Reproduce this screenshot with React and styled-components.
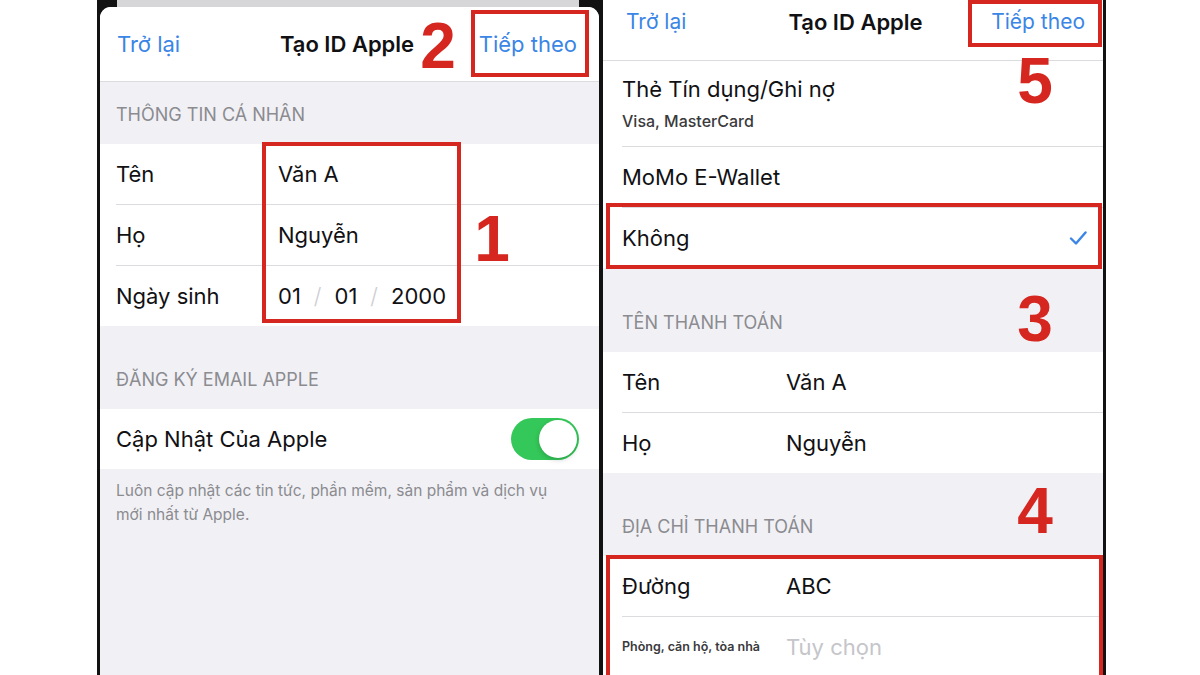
import React from 'react';
import styled, { createGlobalStyle } from 'styled-components';

const C = {
  blue: '#3a85e6',
  text: '#111114',
  gray: '#8b8b90',
  sep: '#dcdce0',
  bg: '#f1f1f5',
  red: '#d5261f',
  frame: '#121212',
};

const Global = createGlobalStyle`
  html, body { margin: 0; padding: 0; background: #fff; }
  body {
    font-family: Inter, "Noto Sans", "Liberation Sans", sans-serif;
    -webkit-font-smoothing: antialiased;
  }
`;

const Page = styled.div`
  position: relative;
  width: 1200px;
  height: 675px;
  overflow: hidden;
  display: flex;
  padding-left: 97px;
  box-sizing: border-box;
  background: #fff;
`;

const Phone = styled.div`
  flex-shrink: 0;
  display: flex;
  flex-direction: column;
  width: ${p => p.$w}px;
  height: 675px;
  background: ${C.frame};
  border-left: ${p => p.$bl}px solid ${C.frame};
  border-right: ${p => p.$br}px solid ${C.frame};
  overflow: hidden;
`;

const BackCard = styled.div`
  flex-shrink: 0;
  height: 7px;
  margin: 0 20px 0 17px;
  background: #d6d6d8;
`;

const Sheet = styled.div`
  flex: 1;
  display: flex;
  flex-direction: column;
  background: ${C.bg};
  border-radius: ${p => p.$r}px ${p => p.$r}px 0 0;
  overflow: hidden;
`;

const NavBar = styled.div`
  flex-shrink: 0;
  box-sizing: border-box;
  height: ${p => p.$h}px;
  display: grid;
  grid-template-columns: 1fr auto 1fr;
  align-items: center;
  padding: 0 ${p => p.$pr}px ${p => p.$pb}px ${p => p.$pl}px;
  background: #fff;
  border-bottom: 1px solid ${C.sep};
`;

const NavButton = styled.span`
  justify-self: ${p => (p.$end ? 'end' : 'start')};
  font-size: ${p => p.$fs}px;
  line-height: 28px;
  color: ${C.blue};
`;

const NavTitle = styled.span`
  font-size: 22px;
  line-height: 28px;
  font-weight: 600;
  color: ${C.text};
`;

const SectionHeader = styled.div`
  flex-shrink: 0;
  box-sizing: border-box;
  height: ${p => p.$h}px;
  display: flex;
  align-items: flex-end;
  padding: 0 0 18px ${p => p.$pl}px;
  font-size: 18px;
  line-height: 22px;
  color: ${C.gray};
`;

const Group = styled.div`
  flex-shrink: 0;
  display: flex;
  flex-direction: column;
  background: #fff;
`;

const Row = styled.div`
  box-sizing: border-box;
  display: flex;
  align-items: center;
  min-height: 61px;
  margin-left: ${p => p.$pl}px;
  padding-right: ${p => p.$pr || 16}px;
  border-bottom: 1px solid ${C.sep};
  &:last-child {
    border-bottom: none;
    min-height: 60px;
  }
`;

const TallRow = styled(Row)`
  flex-direction: column;
  align-items: flex-start;
  padding-top: 14px;
  padding-bottom: 15px;
`;

const Label = styled.span`
  flex-shrink: 0;
  width: ${p => p.$w}px;
  font-size: 22px;
  line-height: 28px;
  color: ${C.text};
`;

const SmallLabel = styled(Label)`
  font-size: 12.5px;
  font-weight: 600;
  color: #3a3a3c;
`;

const Value = styled.span`
  flex: 1;
  font-size: 22px;
  line-height: 28px;
  color: ${p => (p.$placeholder ? '#c5c5ca' : C.text)};
`;

const SubText = styled.span`
  margin-top: 8px;
  font-size: 16px;
  line-height: 20px;
  font-weight: 500;
  color: #3a3a3c;
`;

const DateField = styled.div`
  display: flex;
  align-items: center;
  gap: 13px;
  font-size: 22px;
  line-height: 28px;
  color: ${C.text};
`;

const Slash = styled.span`
  color: #cdcdd2;
  font-weight: 300;
`;

const Toggle = styled.div`
  margin-left: auto;
  width: 68px;
  height: 42px;
  border-radius: 21px;
  background: #34c759;
  display: flex;
  align-items: center;
  justify-content: flex-end;
  padding: 0 2px;
  box-sizing: border-box;
`;

const Knob = styled.div`
  width: 38px;
  height: 38px;
  border-radius: 50%;
  background: #fff;
  box-shadow: 0 2px 5px rgba(0, 0, 0, 0.18);
`;

const Footer = styled.div`
  padding: 10px 40px 0 16px;
  font-size: 15.5px;
  line-height: 24px;
  color: ${C.gray};
`;

const Check = styled.svg`
  margin-left: auto;
  width: 18px;
  height: 16px;
`;

const Mark = styled.div`
  position: absolute;
  box-sizing: border-box;
  left: ${p => p.$x}px;
  top: ${p => p.$y}px;
  width: ${p => p.$w}px;
  height: ${p => p.$h}px;
  border: 4px solid ${C.red};
  pointer-events: none;
`;

const Num = styled.div`
  position: absolute;
  left: ${p => p.$cx - 20}px;
  top: ${p => p.$y}px;
  width: 40px;
  text-align: center;
  font-family: "Liberation Sans", Arial, sans-serif;
  font-weight: 700;
  font-size: 64px;
  line-height: 64px;
  color: ${C.red};
`;

export default function App() {
  return (
    <>
      <Global />
      <Page>
        <Phone $w={499} $bl={3} $br={4}>
          <BackCard />
          <Sheet $r={11}>
            <NavBar $h={75} $pl={17} $pr={22} $pb={0}>
              <NavButton $fs={22}>Trở lại</NavButton>
              <NavTitle>Tạo ID Apple</NavTitle>
              <NavButton $fs={22} $end>Tiếp theo</NavButton>
            </NavBar>
            <SectionHeader $h={62} $pl={16}>THÔNG TIN CÁ NHÂN</SectionHeader>
            <Group>
              <Row $pl={16}>
                <Label $w={162}>Tên</Label>
                <Value>Văn A</Value>
              </Row>
              <Row $pl={16}>
                <Label $w={162}>Họ</Label>
                <Value>Nguyễn</Value>
              </Row>
              <Row $pl={16}>
                <Label $w={162}>Ngày sinh</Label>
                <DateField>
                  <span>01</span>
                  <Slash>/</Slash>
                  <span>01</span>
                  <Slash>/</Slash>
                  <span>2000</span>
                </DateField>
              </Row>
            </Group>
            <SectionHeader $h={83} $pl={16}>ĐĂNG KÝ EMAIL APPLE</SectionHeader>
            <Group>
              <Row $pl={16} $pr={20}>
                <Label $w={260}>Cập Nhật Của Apple</Label>
                <Toggle><Knob /></Toggle>
              </Row>
            </Group>
            <Footer>
              Luôn cập nhật các tin tức, phần mềm, sản phẩm và dịch vụ mới nhất từ Apple.
            </Footer>
          </Sheet>
        </Phone>

        <Phone $w={500} $bl={0} $br={3}>
          <Sheet $r={0}>
            <NavBar $h={61} $pl={23} $pr={18} $pb={17}>
              <NavButton $fs={21}>Trở lại</NavButton>
              <NavTitle>Tạo ID Apple</NavTitle>
              <NavButton $fs={21} $end>Tiếp theo</NavButton>
            </NavBar>
            <Group>
              <TallRow $pl={19}>
                <Label $w={400}>Thẻ Tín dụng/Ghi nợ</Label>
                <SubText>Visa, MasterCard</SubText>
              </TallRow>
              <Row $pl={19}>
                <Label $w={300}>MoMo E-Wallet</Label>
              </Row>
              <Row $pl={19}>
                <Label $w={300}>Không</Label>
                <Check viewBox="0 0 18 16">
                  <path d="M2 8.5 L7 13.5 L16.5 2.5" fill="none" stroke={C.blue} strokeWidth="2.4" strokeLinecap="round" strokeLinejoin="round" />
                </Check>
              </Row>
            </Group>
            <SectionHeader $h={84} $pl={19}>TÊN THANH TOÁN</SectionHeader>
            <Group>
              <Row $pl={19}>
                <Label $w={164}>Tên</Label>
                <Value>Văn A</Value>
              </Row>
              <Row $pl={19}>
                <Label $w={164}>Họ</Label>
                <Value>Nguyễn</Value>
              </Row>
            </Group>
            <SectionHeader $h={83} $pl={19}>ĐỊA CHỈ THANH TOÁN</SectionHeader>
            <Group>
              <Row $pl={19}>
                <Label $w={164}>Đường</Label>
                <Value>ABC</Value>
              </Row>
              <Row $pl={19}>
                <SmallLabel $w={164}>Phòng, căn hộ, tòa nhà</SmallLabel>
                <Value $placeholder>Tùy chọn</Value>
              </Row>
            </Group>
          </Sheet>
        </Phone>

        <Mark $x={471} $y={10} $w={118} $h={67} />
        <Mark $x={262} $y={142} $w={199} $h={181} />
        <Mark $x={968} $y={0} $w={134} $h={47} />
        <Mark $x={606} $y={203} $w={496} $h={66} />
        <Mark $x={606} $y={555} $w={497} $h={140} />

        <Num $cx={438} $y={14}>2</Num>
        <Num $cx={492} $y={207}>1</Num>
        <Num $cx={1035} $y={49}>5</Num>
        <Num $cx={1035} $y={287}>3</Num>
        <Num $cx={1035} $y={479}>4</Num>
      </Page>
    </>
  );
}
